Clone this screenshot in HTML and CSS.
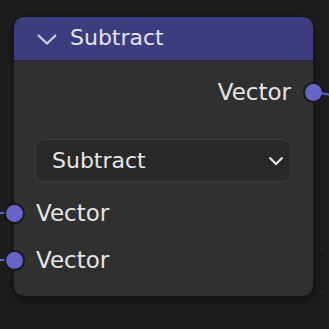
FILE: index.html
```html
<!DOCTYPE html>
<html>
<head>
<meta charset="utf-8">
<link rel="stylesheet" href="styles.css">
</head>
<body>
<div class="canvas">
  <div class="dots"></div>
  <div class="node">
    <div class="header">
      <svg class="hchev" width="20" height="11" viewBox="0 0 20 11"><path d="M1 1 L10 9.5 L19 1" fill="none" stroke="#d4d4e4" stroke-width="2"/></svg>
      <span class="title">Subtract</span>
    </div>
    <div class="body">
      <div class="row out">
        <span class="label">Vector</span>
        <span class="socket sock-out"></span>
        <span class="wire wire-out"></span>
      </div>
      <div class="dropdown">
        <span class="dd-text">Subtract</span>
        <svg class="dchev" width="16" height="10" viewBox="0 0 16 10"><path d="M1.5 1.5 L8 8 L14.5 1.5" fill="none" stroke="#e6e6e6" stroke-width="2.2"/></svg>
      </div>
      <div class="row in in1">
        <span class="wire wire-in"></span>
        <span class="socket sock-in"></span>
        <span class="label">Vector</span>
      </div>
      <div class="row in in2">
        <span class="wire wire-in"></span>
        <span class="socket sock-in"></span>
        <span class="label">Vector</span>
      </div>
    </div>
  </div>
</div>
</body>
</html>
```
FILE: styles.css
```css
html, body {
  margin: 0;
  padding: 0;
  width: 329px;
  height: 329px;
  overflow: hidden;
  background: #1d1d1d;
}
.canvas {
  width: 329px;
  height: 329px;
  padding: 17px 0 0 14px;
  box-sizing: border-box;
  background: #1d1d1d;
  font-family: "DejaVu Sans", sans-serif;
  position: relative;
}
.dots {
  position: absolute;
  left: 321px;
  top: 0;
  width: 2px;
  height: 329px;
  background-image: repeating-linear-gradient(to bottom, transparent 0, transparent 33px, #2a2a2a 33px, #2a2a2a 35px, transparent 35px, transparent 43px);
}
.node {
  position: relative;
  width: 299px;
  height: 279px;
  border-radius: 10px;
  background: #303030;
  box-shadow: 0 0 0 1px #161616, 0 3px 8px rgba(0,0,0,0.55);
  display: flex;
  flex-direction: column;
  z-index: 1;
}
.header {
  height: 43px;
  background: #3c3c7f;
  border-radius: 10px 10px 0 0;
  border-bottom: 2px solid #28283c;
  display: flex;
  align-items: center;
  padding-left: 23px;
  gap: 13px;
}
.hchev { margin-top: 2px; }
.title {
  color: #e4e4ea;
  font-size: 22px;
  line-height: 1;
  margin-top: -1px;
}
.body {
  display: flex;
  flex-direction: column;
  padding-top: 15px;
}
.row {
  position: relative;
  height: 30px;
  display: flex;
  align-items: center;
}
.label {
  color: #e6e6e6;
  font-size: 23px;
  line-height: 1;
}
.out {
  justify-content: flex-end;
  padding-right: 22px;
}
.in {
  padding-left: 22px;
}
.in1 { margin-top: 16px; }
.in2 { margin-top: 17px; }
.dropdown {
  margin: 32px 22px 0 21px;
  height: 41px;
  border: 1px solid #3a3a3a;
  border-radius: 9px;
  background: #282828;
  display: flex;
  align-items: center;
  justify-content: space-between;
  padding: 0 6px 0 16px;
}
.dd-text {
  color: #e6e6e6;
  font-size: 22px;
  line-height: 1;
}
.socket {
  position: absolute;
  width: 17px;
  height: 17px;
  border-radius: 50%;
  background: #6464c9;
  border: 2px solid #181818;
  top: 50%;
  margin-top: -10.5px;
}
.sock-out { right: -10.5px; }
.sock-in { left: -10.5px; }
.wire {
  position: absolute;
  height: 2px;
  background: #6060c0;
}
.wire-out {
  right: -17px;
  width: 9px;
  top: 16px;
  transform: rotate(12deg);
}
.wire-in {
  left: -14px;
  width: 6px;
  top: 14px;
}
```
